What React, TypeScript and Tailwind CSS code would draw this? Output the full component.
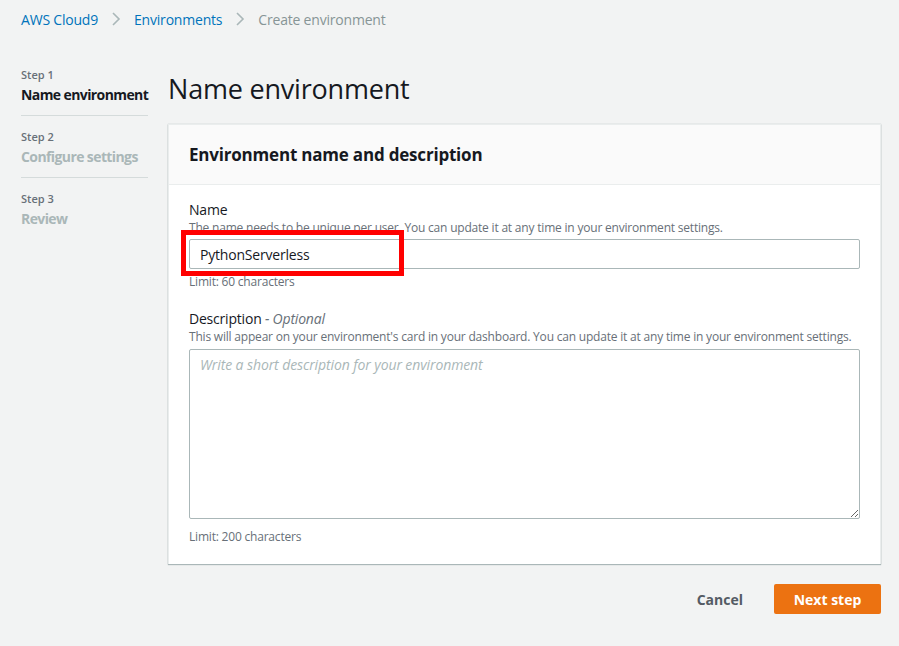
import React from "react";

const font = { fontFamily: "'Open Sans', 'Noto Sans', sans-serif" };

const steps = [
  { step: "Step 1", title: "Name environment", active: true },
  { step: "Step 2", title: "Configure settings", active: false },
  { step: "Step 3", title: "Review", active: false },
];

function Chevron() {
  return (
    <svg width="10" height="16" viewBox="0 0 10 16" className="mx-[13px]">
      <path d="M2 2l6 6-6 6" fill="none" stroke="#aab7b8" strokeWidth="1.6" />
    </svg>
  );
}

export default function App() {
  return (
    <div style={font} className="w-[899px] h-[646px] bg-[#f2f3f3] overflow-hidden text-[#16191f]">
      <nav className="flex items-center h-[38px] px-[21px] text-[14px] tracking-[-0.2px]">
        <span className="text-[#0073bb]">AWS Cloud9</span>
        <Chevron />
        <span className="text-[#0073bb]">Environments</span>
        <Chevron />
        <span className="text-[#879596]">Create environment</span>
      </nav>

      <div className="flex mt-[28px]">
        <aside className="w-[127px] ml-[21px] mr-[20px] shrink-0">
          {steps.map((s, i) => (
            <div key={s.step} className={`${i < steps.length - 1 ? "border-b border-[#d5dbdb] pb-[10px] mb-[12px]" : ""}`}>
              <div className="text-[11px] leading-[18px] text-[#687078] font-semibold">{s.step}</div>
              <div
                className={`mt-[1px] text-[14px] leading-[20px] font-bold whitespace-nowrap tracking-[-0.6px] ${s.active ? "text-[#16191f]" : "text-[#aab7b8]"}`}
              >
                {s.title}
              </div>
            </div>
          ))}
        </aside>

        <main className="w-[713px]">
          <h1 className="text-[27px] leading-[34px] tracking-[-0.2px] mt-[6px] mb-[18px]">Name environment</h1>

          <section className="bg-white border-x border-t border-[#eaeded] shadow-[0_1px_1px_#aab7b8,0_0_1px_#aab7b8]">
            <div className="h-[60px] bg-[#fafafa] border-b border-[#eaeded] px-[20px] flex items-center">
              <h2 className="text-[17px] font-bold tracking-[-0.2px]">Environment name and description</h2>
            </div>

            <div className="px-[20px] pt-[15px] pb-[19px]">
              <label className="block text-[14px] leading-[20px] tracking-[-0.2px]">Name</label>
              <p className="text-[12px] leading-[16px] text-[#687078] tracking-[-0.2px]">
                The name needs to be unique per user. You can update it at any time in your environment settings.
              </p>
              <div className="relative mt-[3px]">
                <div className="h-[30px] border border-[#aab7b8] rounded-[2px] flex items-center px-[10px] text-[14px] tracking-[-0.2px]">
                  PythonServerless
                </div>
                <div className="absolute left-[-8px] top-[-9px] w-[223px] h-[46px] border-[5px] border-[#ff0000]" />
              </div>
              <p className="text-[12px] leading-[16px] mt-[5px] text-[#687078] tracking-[-0.2px]">Limit: 60 characters</p>

              <label className="block mt-[19px] text-[14px] leading-[20px] tracking-[-0.2px]">
                Description <span className="italic text-[#687078]">- Optional</span>
              </label>
              <p className="text-[12px] leading-[16px] text-[#687078] tracking-[-0.2px] whitespace-nowrap">
                This will appear on your environment's card in your dashboard. You can update it at any time in your environment settings.
              </p>
              <textarea
                readOnly
                placeholder="Write a short description for your environment"
                className="block w-full h-[170px] mt-[4px] border border-[#aab7b8] rounded-[2px] px-[10px] py-[4px] text-[14px] italic tracking-[-0.1px] placeholder:text-[#aab7b8] resize-y outline-none"
              />
              <p className="text-[12px] leading-[16px] mt-[10px] text-[#687078] tracking-[-0.2px]">Limit: 200 characters</p>
            </div>
          </section>

          <div className="flex justify-end items-center mt-[20px] gap-[31px]">
            <button className="text-[14px] font-bold text-[#545b64]">Cancel</button>
            <button className="h-[30px] w-[107px] bg-[#ec7211] rounded-[2px] text-white text-[14px] font-bold">Next step</button>
          </div>
        </main>
      </div>
    </div>
  );
}
